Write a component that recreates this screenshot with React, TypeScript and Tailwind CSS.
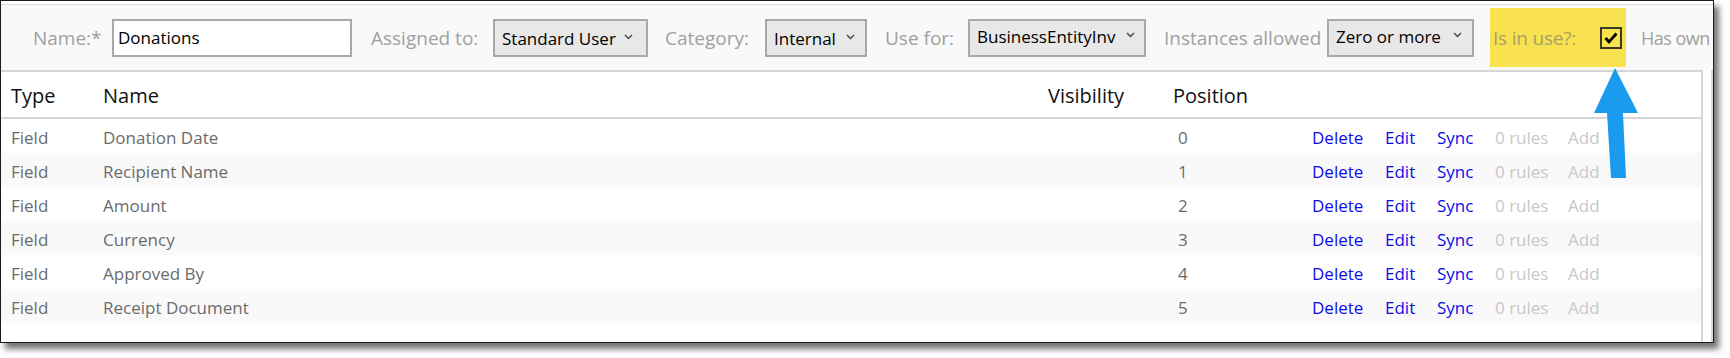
import React from "react";

const rows = [
  { name: "Donation Date", pos: "0" },
  { name: "Recipient Name", pos: "1" },
  { name: "Amount", pos: "2" },
  { name: "Currency", pos: "3" },
  { name: "Approved By", pos: "4" },
  { name: "Receipt Document", pos: "5" },
];

function Chevron() {
  return (
    <svg width="9" height="6" viewBox="0 0 9 6" className="shrink-0">
      <polyline points="1,1 4.5,4.5 8,1" fill="none" stroke="#444" strokeWidth="1.4" />
    </svg>
  );
}

function Select({ text, w, chevronRight, up }: { text: string; w: string; chevronRight: string; up?: boolean }) {
  return (
    <div className={`${w} h-[38px] shrink-0 border-2 border-[#a9a9a9] bg-[#e8e8e8] flex items-center relative`}>
      <span className={`pl-[7px] text-[17px] text-black leading-none whitespace-nowrap ${up ? "-mt-[3px]" : "mt-[1px]"}`}>{text}</span>
      <span className={`absolute ${chevronRight} ${up ? "top-[11px]" : "top-[13px]"}`}>
        <Chevron />
      </span>
    </div>
  );
}

export default function App() {
  const font = { fontFamily: '"Open Sans", "Noto Sans", sans-serif' };
  return (
    <div className="w-[1730px] h-[358px] bg-white relative" style={font}>
      <div className="w-[1714px] h-[343px] border border-[#1c1c1c] shadow-[5px_6px_6px_rgba(0,0,0,0.55)] bg-white overflow-hidden flex flex-col">
        <div className="h-[3px] shrink-0 bg-white" />
        {/* toolbar */}
        <div className="h-[66px] shrink-0 border-t border-[#dcdcdc] bg-[#f9f9f9] flex items-center pl-[32px] text-[19px] text-[#a0a0a0] whitespace-nowrap">
          <div className="w-[79px] shrink-0 pt-[2px]">Name:*</div>
          <div className="w-[240px] h-[38px] shrink-0 border-2 border-[#a9a9a9] bg-white flex items-center pl-[4px] text-[17px] text-black">
            Donations
          </div>
          <div className="w-[122px] ml-[19px] shrink-0 pt-[2px]">Assigned to:</div>
          <Select text="Standard User" w="w-[155px]" chevronRight="right-[13px]" />
          <div className="w-[100px] ml-[17px] shrink-0 pt-[2px]">Category:</div>
          <Select text="Internal" w="w-[102px]" chevronRight="right-[10px]" />
          <div className="w-[83px] ml-[18px] shrink-0 pt-[2px]">Use for:</div>
          <Select text="BusinessEntityInv" w="w-[178px]" chevronRight="right-[9px]" up />
          <div className="w-[163px] ml-[18px] shrink-0 pt-[2px]">Instances allowed</div>
          <Select text="Zero or more" w="w-[147px]" chevronRight="right-[10px]" up />
          <div className="ml-[16px] w-[136px] h-[59px] shrink-0 bg-[#f8e250] flex items-center">
            <span className="pl-[3px] w-[110px] pt-[2px] text-[#a8a062] tracking-[-0.2px]">Is in use?:</span>
            <div className="w-[22px] h-[22px] border-2 border-[#3a3826] flex items-center justify-center">
              <svg width="16" height="14" viewBox="0 0 16 14">
                <polyline points="2.5,7 6,11 13.5,2.5" fill="none" stroke="#000" strokeWidth="2.8" />
              </svg>
            </div>
          </div>
          <div className="ml-[15px] shrink-0 pt-[2px] text-[18px] tracking-[-0.5px]">Has own</div>
        </div>
        {/* body */}
        <div className="flex-1 flex min-h-0">
          <div className="w-[1702px] shrink-0 border-t-2 border-r-2 border-[#d6d6d6] bg-white flex flex-col">
            <div className="h-[47px] shrink-0 border-b-2 border-[#d6d6d6] grid grid-cols-[92px_945px_125px_139px_1fr] items-center pt-[2px] text-[20px] text-[#111]">
              <div className="pl-[10px]">Type</div>
              <div className="pl-[10px]">Name</div>
              <div className="pl-[10px]">Visibility</div>
              <div className="pl-[10px]">Position</div>
              <div />
            </div>
            {rows.map((r, i) => (
              <div
                key={r.name}
                className={`h-[34px] shrink-0 grid grid-cols-[92px_945px_125px_139px_1fr] items-center pt-[3px] text-[17px] text-[#6b6b6b] ${i % 2 === 1 ? "bg-[#f9f9f9]" : "bg-white"}`}
              >
                <div className="pl-[10px]">Field</div>
                <div className="pl-[10px]">{r.name}</div>
                <div />
                <div className="pl-[15px]">{r.pos}</div>
                <div className="pl-[10px] flex items-center whitespace-nowrap">
                  <span className="w-[73px] shrink-0 text-[#0c0ce8]">Delete</span>
                  <span className="w-[52px] shrink-0 text-[#0c0ce8]">Edit</span>
                  <span className="w-[58px] shrink-0 text-[#0c0ce8]">Sync</span>
                  <span className="w-[73px] shrink-0 text-[#c8c8c8]">0 rules</span>
                  <span className="w-[38px] shrink-0 overflow-hidden text-[#c8c8c8]">Add</span>
                </div>
              </div>
            ))}
          </div>
          <div className="w-[8px] shrink-0" />
          <div className="flex-1 border-t-2 border-l-2 border-[#d6d6d6]" />
        </div>
      </div>
      {/* arrow overlay */}
      <svg className="absolute left-0 top-0 pointer-events-none" width="1730" height="358" viewBox="0 0 1730 358">
        <polygon points="1615,68 1638,113 1623,113 1626,178 1611,178 1607,113 1594,113" fill="#1b9bf0" />
      </svg>
    </div>
  );
}
